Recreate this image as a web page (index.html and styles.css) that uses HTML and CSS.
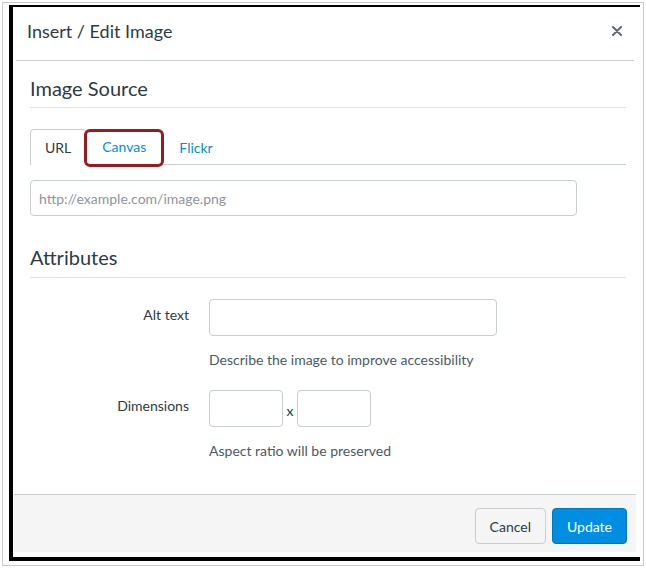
FILE: index.html
```html
<!DOCTYPE html>
<html lang="en">
<head>
    <meta charset="UTF-8">
    <meta name="viewport" content="width=device-width, initial-scale=1.0">
    <title>Insert / Edit Image</title>
    <link rel="stylesheet" href="styles.css">
</head>
<body>
    <div class="frame">
        <div class="dialog">
            <div class="dialog-header">
                <h1>Insert / Edit Image</h1>
                <button type="button" class="close-btn" aria-label="Close">
                    <svg width="10" height="10" viewBox="0 0 10 10">
                        <path d="M1 1 L9 9 M9 1 L1 9" stroke="#5c6b76" stroke-width="2" stroke-linecap="round"/>
                    </svg>
                </button>
            </div>

            <div class="dialog-body">
                <h2>Image Source</h2>
                <div class="tabs">
                    <a class="tab active">URL</a>
                    <a class="tab highlighted">Canvas</a>
                    <a class="tab">Flickr</a>
                </div>
                <input type="text" class="url-input" placeholder="http://example.com/image.png">

                <h2 class="attributes">Attributes</h2>
                <div class="form-row first-row">
                    <label for="altText">Alt text</label>
                    <div class="field">
                        <input type="text" id="altText" class="alt-input">
                        <p class="hint">Describe the image to improve accessibility</p>
                    </div>
                </div>
                <div class="form-row">
                    <label for="width">Dimensions</label>
                    <div class="field">
                        <div class="dimensions">
                            <input type="text" id="width" class="dim-input">
                            <span class="times">x</span>
                            <input type="text" id="height" class="dim-input">
                        </div>
                        <p class="hint">Aspect ratio will be preserved</p>
                    </div>
                </div>
            </div>

            <div class="dialog-footer">
                <button type="button" class="cancel-btn">Cancel</button>
                <button type="button" class="update-btn">Update</button>
            </div>
        </div>
    </div>
</body>
</html>
```

FILE: styles.css
```css
body {
    font-family: Lato, "Open Sans", sans-serif;
    margin: 0;
    background: #ffffff;
    color: #2d3b45;
}

.frame {
    margin: 2px;
    height: 562px;
    border: 1px solid #c9c9c9;
    display: flex;
    flex-direction: column;
}

.dialog {
    flex: 1;
    margin: 2px 3px 4px 6px;
    border-top: 2px solid #000;
    border-left: 4px solid #000;
    border-bottom: 4px solid #000;
    display: flex;
    flex-direction: column;
}

.dialog-header {
    height: 54px;
    box-sizing: border-box;
    margin: 0 6px 0 3px;
    padding: 0 10px 6px 11px;
    border-bottom: 1px solid #c7cdd1;
    display: flex;
    align-items: center;
    justify-content: space-between;
}

h1 {
    margin: 0;
    font-size: 18px;
    font-weight: normal;
    color: #2d3b45;
}

.close-btn {
    border: none;
    background: none;
    padding: 0;
    width: 14px;
    height: 14px;
    display: flex;
    align-items: center;
    justify-content: center;
    cursor: pointer;
}

.dialog-body {
    flex: 1;
    padding: 0 14px 0 17px;
}

h2 {
    margin: 0;
    padding: 15px 0 7px;
    font-size: 20px;
    line-height: 24px;
    font-weight: normal;
    color: #2d3b45;
    border-bottom: 1px solid #e1e4e6;
}

h2.attributes {
    padding-top: 29px;
    padding-bottom: 8px;
}

.tabs {
    margin-top: 21px;
    display: flex;
    border-bottom: 1px solid #c7cdd1;
    height: 35px;
}

.tab {
    font-size: 14px;
    color: #008ee2;
    padding: 0 14px;
    display: flex;
    align-items: center;
    border: 1px solid transparent;
    border-bottom: none;
    border-radius: 4px 4px 0 0;
    cursor: pointer;
}

.tab.active {
    color: #2d3b45;
    background: #fff;
    border-color: #c7cdd1;
    margin-bottom: -1px;
    padding-bottom: 1px;
}

.tab.highlighted {
    box-sizing: border-box;
    border: 3px solid #9a1a22;
    border-radius: 6px;
    padding: 0 15px 3px;
    height: 38px;
    margin-left: -2px;
    margin-bottom: -3px;
}

.url-input {
    display: block;
    margin-top: 15px;
    width: 547px;
    height: 36px;
}

input {
    box-sizing: border-box;
    border: 1px solid #c7cdd1;
    border-radius: 4px;
    padding: 0 8px;
    font-family: inherit;
    font-size: 14px;
    color: #2d3b45;
}

input::placeholder {
    color: #8b969e;
}

.form-row {
    display: flex;
    gap: 20px;
    margin-top: 22px;
}

.form-row.first-row {
    margin-top: 21px;
}

label {
    width: 159px;
    text-align: right;
    font-size: 14px;
    padding-top: 7px;
    color: #2d3b45;
}

.alt-input {
    width: 288px;
    height: 37px;
    display: block;
}

.hint {
    margin: 15px 0 0;
    font-size: 14px;
    line-height: 17px;
    color: #485a67;
}

.dimensions {
    display: flex;
    align-items: center;
}

.dim-input {
    width: 74px;
    height: 37px;
}

.times {
    font-size: 14px;
    width: 14px;
    text-align: center;
    padding-top: 4px;
}

.dialog-footer {
    margin: 0 4px 5px 1px;
    padding: 13px 9px 8px;
    background: #f5f5f5;
    border-top: 1px solid #c7cdd1;
    display: flex;
    justify-content: flex-end;
    gap: 6px;
}

.cancel-btn, .update-btn {
    height: 36px;
    padding: 0 14px;
    border-radius: 4px;
    font-family: inherit;
    font-size: 14px;
    cursor: pointer;
}

.cancel-btn {
    background-color: #f5f5f5;
    border: 1px solid #c7cdd1;
    color: #2d3b45;
}

.update-btn {
    background-color: #008ee2;
    border: 1px solid #0374b5;
    color: white;
}
```
